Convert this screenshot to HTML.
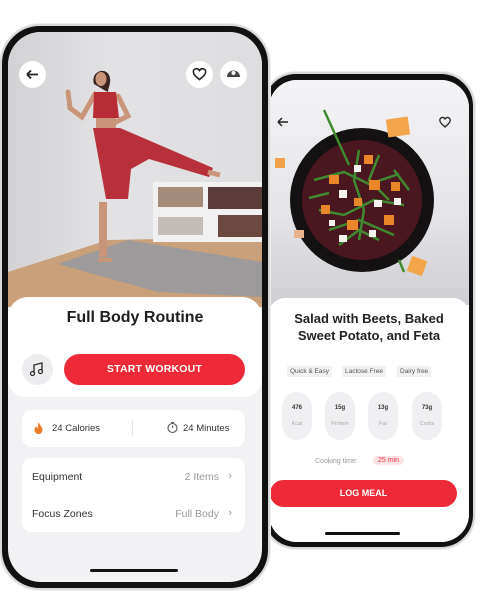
<!DOCTYPE html>
<html><head><meta charset="utf-8">
<style>
*{margin:0;padding:0;box-sizing:border-box}
body{width:489px;height:603px;background:#fff;position:relative;overflow:hidden;font-family:"Liberation Sans",sans-serif}
.f{position:absolute;background:#111;border:2px solid #d9d9dc;box-shadow:0 0 0 1px #eee}
.s{position:absolute;overflow:hidden;background:#f2f2f4}
.t{position:absolute;white-space:nowrap}
</style></head><body>

<!-- phone 2 (behind) -->
<div class="f" style="left:262px;top:72px;width:213px;height:477px;border-radius:34px"></div>
<div class="s" style="left:269px;top:80px;width:200px;height:462px;border-radius:28px;background:#fff">
  <div style="position:absolute;left:0;top:0;width:200px;height:225px;background:linear-gradient(#f4f4f6,#e4e4e8 60%,#cfcfd3)"></div>
  <svg style="position:absolute;left:0;top:0" width="200" height="225">
    <path d="M9 42 H19 M9 42 l4 -4 M9 42 l4 4" stroke="#222" stroke-width="1.5" fill="none"/>
    <path d="M176 39 c-2-3-6-1-5 2 c0 2 3 4 5 6 c2-2 5-4 5-6 c1-3-3-5-5-2z" stroke="#222" stroke-width="1.3" fill="none"/>
    <circle cx="93" cy="120" r="72" fill="#141112"/>
    <circle cx="93" cy="120" r="60" fill="#4a1620"/>
    <g stroke="#3f8a2e" stroke-width="2.5" fill="none">
      <path d="M45 100 l30 -8 l25 12 l30 -10"/><path d="M50 130 l25 5 l30 -15 l30 5"/><path d="M90 70 l-5 30 l10 30 l-5 30"/>
      <path d="M55 30 l25 55"/><path d="M130 180 l5 12"/><path d="M60 150 l30 -10 l35 15"/><path d="M110 75 l-10 25 l20 20"/>
      <path d="M40 118 l20 -5"/><path d="M70 165 l20 -15 l20 10"/><path d="M125 90 l15 20"/></g>
    <g fill="#e9862a"><rect x="60" y="95" width="10" height="9"/><rect x="100" y="100" width="11" height="10"/><rect x="78" y="140" width="11" height="10"/><rect x="115" y="135" width="10" height="10"/><rect x="95" y="75" width="9" height="9"/><rect x="122" y="102" width="9" height="9"/><rect x="52" y="125" width="9" height="9"/><rect x="85" y="118" width="8" height="8"/></g>
    <g fill="#f4f2ef"><rect x="70" y="110" width="8" height="8"/><rect x="105" y="120" width="8" height="7"/><rect x="85" y="85" width="7" height="7"/><rect x="125" y="118" width="7" height="7"/><rect x="70" y="155" width="8" height="7"/><rect x="100" y="150" width="7" height="7"/><rect x="60" y="140" width="6" height="6"/></g>
    <rect x="118" y="38" width="22" height="18" fill="#f2a54a" transform="rotate(-8 129 47)"/>
    <rect x="6" y="78" width="10" height="10" fill="#f1a24a"/>
    <rect x="140" y="178" width="16" height="16" fill="#f2a54a" transform="rotate(20 148 186)"/>
    <rect x="25" y="150" width="10" height="8" fill="#e8b28a"/>
  </svg>
  <div style="position:absolute;left:0;top:218px;width:200px;height:250px;background:#fff;border-radius:16px 16px 0 0"></div>
  <div class="t" style="left:0;width:200px;text-align:center;top:230px;font-size:13px;font-weight:bold;color:#222;line-height:17px">Salad with Beets, Baked<br>Sweet Potato, and Feta</div>
  <div class="t" style="left:18px;top:286px;font-size:6.5px;color:#555;background:#f1f1f3;padding:2px 3px">Quick &amp; Easy</div>
  <div class="t" style="left:73px;top:286px;font-size:6.5px;color:#555;background:#f1f1f3;padding:2px 3px">Lactose Free</div>
  <div class="t" style="left:128px;top:286px;font-size:6.5px;color:#555;background:#f1f1f3;padding:2px 3px">Dairy free</div>
  <div style="position:absolute;left:13px;top:312px;width:30px;height:48px;border-radius:15px;background:#f0f0f2"></div>
  <div style="position:absolute;left:56px;top:312px;width:30px;height:48px;border-radius:15px;background:#f0f0f2"></div>
  <div style="position:absolute;left:99px;top:312px;width:30px;height:48px;border-radius:15px;background:#f0f0f2"></div>
  <div style="position:absolute;left:143px;top:312px;width:30px;height:48px;border-radius:15px;background:#f0f0f2"></div>
  <div class="t" style="left:13px;width:30px;text-align:center;top:325px;font-size:6px;font-weight:bold;color:#333">476</div>
  <div class="t" style="left:56px;width:30px;text-align:center;top:325px;font-size:6px;font-weight:bold;color:#333">15g</div>
  <div class="t" style="left:99px;width:30px;text-align:center;top:325px;font-size:6px;font-weight:bold;color:#333">13g</div>
  <div class="t" style="left:143px;width:30px;text-align:center;top:325px;font-size:6px;font-weight:bold;color:#333">73g</div>
  <div class="t" style="left:13px;width:30px;text-align:center;top:341px;font-size:5.5px;color:#aaa">Kcal</div>
  <div class="t" style="left:56px;width:30px;text-align:center;top:341px;font-size:5.5px;color:#aaa">Protein</div>
  <div class="t" style="left:99px;width:30px;text-align:center;top:341px;font-size:5.5px;color:#aaa">Fat</div>
  <div class="t" style="left:143px;width:30px;text-align:center;top:341px;font-size:5.5px;color:#aaa">Carbs</div>
  <div class="t" style="left:46px;top:378px;font-size:7px;color:#999">Cooking time:</div>
  <div class="t" style="left:104px;top:376px;font-size:7px;color:#ee3340;background:#fde3e4;border-radius:6px;padding:1px 5px">25 min</div>
  <div style="position:absolute;left:1px;top:400px;width:187px;height:27px;border-radius:14px;background:#ee2a38"></div>
  <div class="t" style="left:1px;width:187px;text-align:center;top:408px;font-size:9px;font-weight:bold;color:#fff">LOG MEAL</div>
  <div style="position:absolute;left:56px;top:452px;width:75px;height:3px;border-radius:2px;background:#111"></div>
</div>

<!-- phone 1 (front) -->
<div class="f" style="left:0;top:24px;width:270px;height:566px;border-radius:40px"></div>
<div class="s" style="left:8px;top:32px;width:254px;height:550px;border-radius:33px">
  <div style="position:absolute;left:0;top:0;width:254px;height:275px;background:linear-gradient(90deg,#d2d2d4,#e2e2e4 40%,#dedee0)"></div>
  <svg style="position:absolute;left:0;top:0" width="254" height="275">
    <path d="M0 240 L100 208 L254 205 L254 275 L0 275z" fill="#c9a07a"/>
    <path d="M50 232 L120 208 L254 230 L254 265 L150 260z" fill="#9c9a9a"/>
    <rect x="145" y="150" width="109" height="60" fill="#f1f1f2"/>
    <rect x="150" y="155" width="45" height="20" fill="#a58b7a"/><rect x="200" y="155" width="54" height="22" fill="#5a3d3a"/>
    <rect x="150" y="185" width="45" height="18" fill="#c4bcb8"/><rect x="210" y="183" width="44" height="22" fill="#6a4a40"/>
    <path d="M86 52 c-4-14 14-18 16-6 c1 6-2 10-2 14 l-4-2z" fill="#3a2520"/>
    <ellipse cx="93" cy="47" rx="5.5" ry="7" fill="#c99478"/>
    <path d="M87 62 L74 85 L62 76 L60 60" stroke="#c99478" stroke-width="5" fill="none" stroke-linecap="round"/>
    <path d="M110 64 L120 84 L104 92" stroke="#c99478" stroke-width="5" fill="none" stroke-linecap="round"/>
    <path d="M86 60 h22 l3 26 h-26z" fill="#b72c35"/>
    <path d="M88 86 h20 v10 h-20z" fill="#c99478"/>
    <path d="M85 96 h27 l28 12 l65 28 l-4 9 l-60 -18 l-18 10 l-3 30 h-22 z" fill="#b8313a"/>
    <path d="M95 170 l0 55" stroke="#c99478" stroke-width="8" fill="none"/>
    <path d="M90 228 h14" stroke="#c99478" stroke-width="4"/>
    <path d="M200 140 l12 3" stroke="#c99478" stroke-width="5"/>
  </svg>
  <div style="position:absolute;left:11px;top:29px;width:27px;height:27px;border-radius:50%;background:#fff"></div>
  <svg style="position:absolute;left:11px;top:29px" width="27" height="27"><path d="M8 13.5 H19 M8 13.5 l4 -4 M8 13.5 l4 4" stroke="#222" stroke-width="1.8" fill="none"/></svg>
  <div style="position:absolute;left:178px;top:29px;width:27px;height:27px;border-radius:50%;background:#fff"></div>
  <svg style="position:absolute;left:178px;top:29px" width="27" height="27"><path d="M13.5 9.5 c-2-3-7-2-6 2 c0 3 4 5 6 7 c2-2 6-4 6-7 c1-4-4-5-6-2z" stroke="#222" stroke-width="1.6" fill="none"/></svg>
  <div style="position:absolute;left:212px;top:29px;width:27px;height:27px;border-radius:50%;background:#fff"></div>
  <svg style="position:absolute;left:212px;top:29px" width="27" height="27"><path d="M7 16 a6.5 6.5 0 0 1 13 0z" fill="#444"/><circle cx="13.5" cy="12" r="2" fill="#fff"/></svg>

  <div style="position:absolute;left:0;top:265px;width:254px;height:100px;background:#fff;border-radius:20px 20px 18px 18px"></div>
  <div class="t" style="left:0;width:254px;text-align:center;top:277px;font-size:16px;font-weight:bold;color:#1e1e1e">Full Body Routine</div>
  <div style="position:absolute;left:14px;top:322px;width:31px;height:31px;border-radius:50%;background:#ededef"></div>
  <svg style="position:absolute;left:14px;top:322px" width="31" height="31"><path d="M12 19 V11 l8 -2 V17" stroke="#333" stroke-width="1.4" fill="none"/><circle cx="10.5" cy="19.5" r="2" stroke="#333" stroke-width="1.3" fill="none"/><circle cx="18.5" cy="17.5" r="2" stroke="#333" stroke-width="1.3" fill="none"/></svg>
  <div style="position:absolute;left:56px;top:322px;width:181px;height:31px;border-radius:16px;background:#ee2a38"></div>
  <div class="t" style="left:56px;width:181px;text-align:center;top:331px;font-size:10.5px;font-weight:bold;color:#fff;letter-spacing:.2px">START WORKOUT</div>

  <div style="position:absolute;left:14px;top:378px;width:223px;height:37px;border-radius:10px;background:#fff"></div>
  <svg style="position:absolute;left:25px;top:389px" width="11" height="13"><path d="M5.5 1 c1 3 4 5 4 8 a4 4 0 0 1 -8 0 c0-2 1-3 2-4 c0 2 1 2 1.5 2 c0-2 0-4 .5-6z" fill="#f07a28"/></svg>
  <div class="t" style="left:44px;top:391px;font-size:9.5px;color:#333">24 Calories</div>
  <div style="position:absolute;left:124px;top:389px;width:1px;height:15px;background:#e4e4e6"></div>
  <svg style="position:absolute;left:158px;top:389px" width="13" height="13"><circle cx="6.5" cy="7" r="4.5" stroke="#555" stroke-width="1.1" fill="none"/><path d="M6.5 7 V4.5 M5 1.5 h3" stroke="#555" stroke-width="1.1"/></svg>
  <div class="t" style="left:175px;top:391px;font-size:9.5px;color:#333">24 Minutes</div>

  <div style="position:absolute;left:14px;top:426px;width:223px;height:74px;border-radius:10px;background:#fff"></div>
  <div class="t" style="left:24px;top:439px;font-size:10.5px;color:#333">Equipment</div>
  <div class="t" style="right:43px;top:439px;font-size:10.5px;color:#999">2 Items</div>
  <div class="t" style="right:30px;top:438px;font-size:11px;color:#999">›</div>
  <div class="t" style="left:24px;top:476px;font-size:10.5px;color:#333">Focus Zones</div>
  <div class="t" style="right:43px;top:476px;font-size:10.5px;color:#999">Full Body</div>
  <div class="t" style="right:30px;top:475px;font-size:11px;color:#999">›</div>
  <div style="position:absolute;left:82px;top:537px;width:88px;height:3px;border-radius:2px;background:#111"></div>
</div>
</body></html>
